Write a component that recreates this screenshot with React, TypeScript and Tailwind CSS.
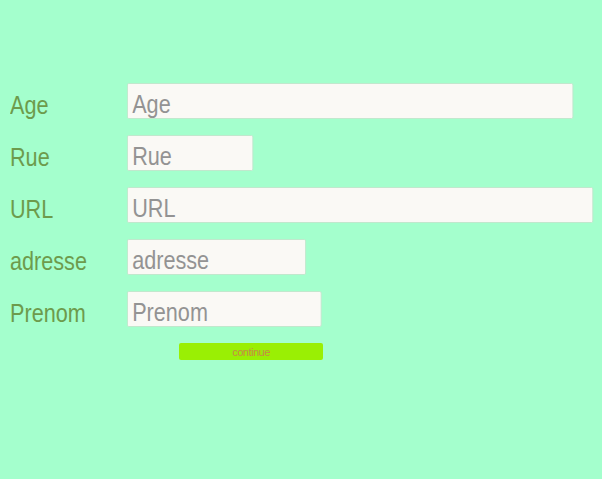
import React from "react";

const rows: { label: string; w: string }[] = [
  { label: "Age", w: "w-[516px]" },
  { label: "Rue", w: "w-[146px]" },
  { label: "URL", w: "w-[539px]" },
  { label: "adresse", w: "w-[207px]" },
  { label: "Prenom", w: "w-[225px]" },
];

export default function App() {
  return (
    <div
      className="w-[602px] h-[479px] bg-[#a4ffcd] pt-[83px] overflow-hidden"
      style={{ fontFamily: '"Liberation Sans", Arial, sans-serif' }}
    >
      <div className="flex flex-col gap-4">
        {rows.map((r) => (
          <div key={r.label} className="flex items-start h-9">
            <div className="w-[127px] shrink-0 pl-[10px] h-9 leading-[36px] pt-[4px] text-[25px] text-[#6d9b4c]">
              <span className="inline-block origin-left scale-x-[0.865] whitespace-nowrap">{r.label}</span>
            </div>
            <input
              className={`${r.w} shrink-0 h-9 origin-left scale-x-[0.865] border border-[#bfe6cb] bg-[#faf9f5] pl-[5px] pt-[7px] pb-0 text-[25px] text-[#555] placeholder:text-[#939393] outline-none rounded-[2px]`}
              placeholder={r.label}
              style={{ fontFamily: '"Liberation Sans", Arial, sans-serif' }}
            />
          </div>
        ))}
      </div>
      <div className="flex pl-[179px] mt-4">
        <button className="w-[144px] h-[17px] rounded-[2px] bg-[#9aef04] text-[11px] leading-[15px] text-[#c58a48] pt-[2px] tracking-[-0.5px]">
          continue
        </button>
      </div>
    </div>
  );
}
